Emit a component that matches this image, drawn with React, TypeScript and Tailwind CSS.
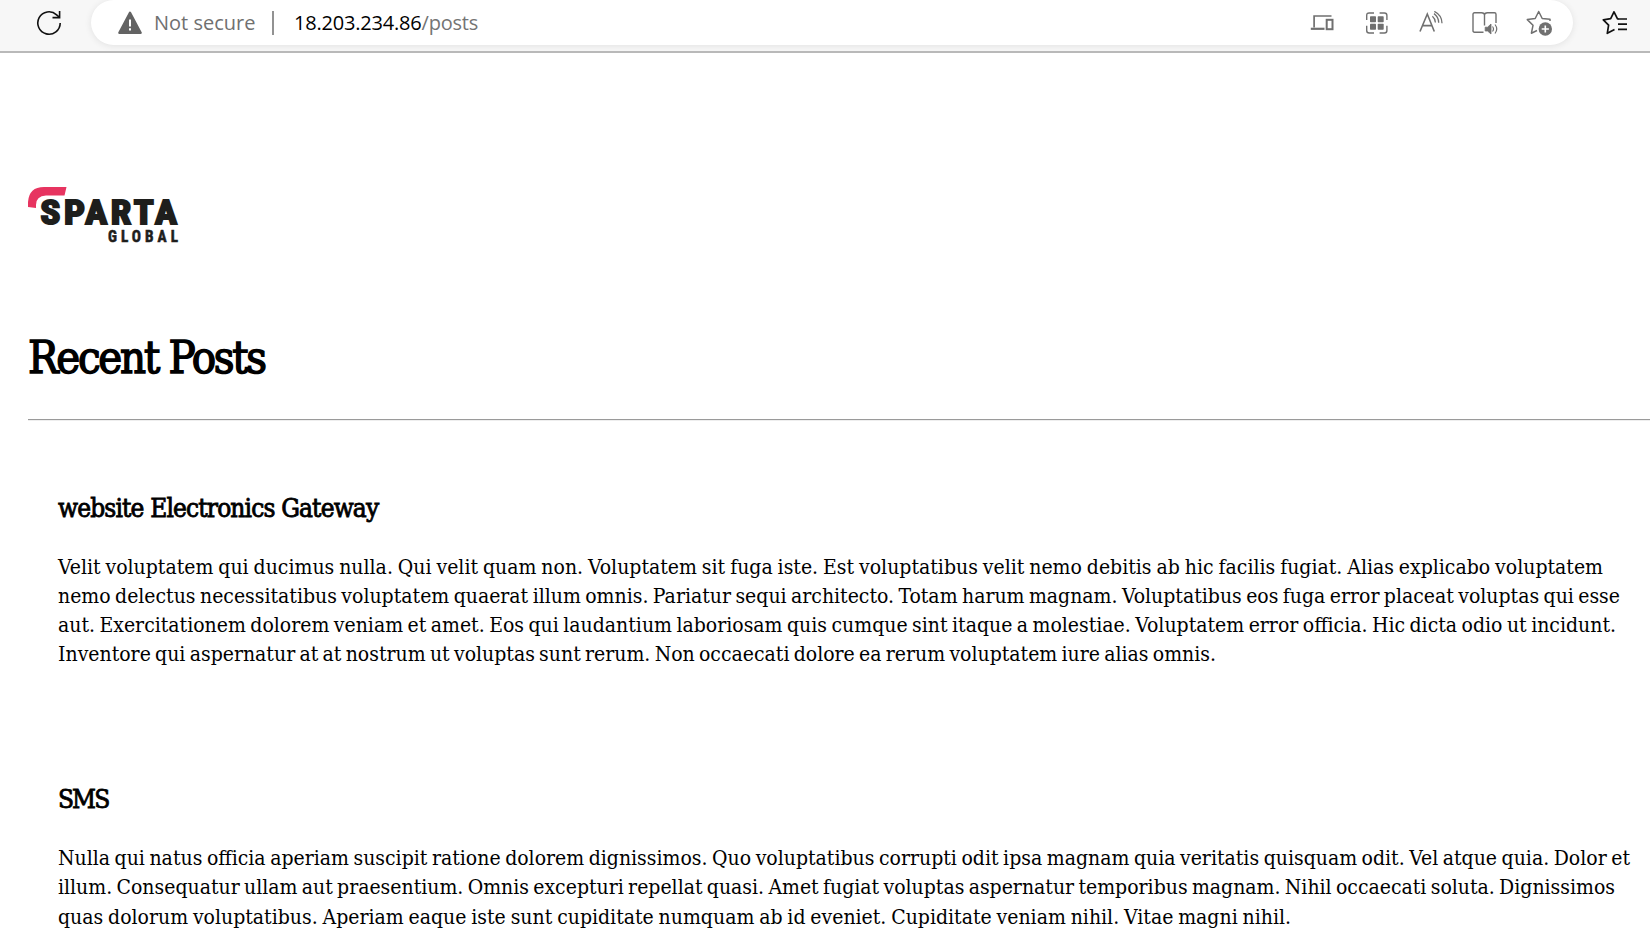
import React from "react";

const posts = [
  {
    title: "website Electronics Gateway",
    titleClass: "w-[322px] tracking-[-0.85px]",
    lines: [
      { text: "Velit voluptatem qui ducimus nulla. Qui velit quam non. Voluptatem sit fuga iste. Est voluptatibus velit nemo debitis ab hic facilis fugiat. Alias explicabo voluptatem", width: "w-[1545px]" },
      { text: "nemo delectus necessitatibus voluptatem quaerat illum omnis. Pariatur sequi architecto. Totam harum magnam. Voluptatibus eos fuga error placeat voluptas qui esse", width: "w-[1562px]" },
      { text: "aut. Exercitationem dolorem veniam et amet. Eos qui laudantium laboriosam quis cumque sint itaque a molestiae. Voluptatem error officia. Hic dicta odio ut incidunt.", width: "w-[1558px]" },
      { text: "Inventore qui aspernatur at at nostrum ut voluptas sunt rerum. Non occaecati dolore ea rerum voluptatem iure alias omnis.", width: "w-[1158px]" },
    ],
  },
  {
    title: "SMS",
    titleClass: "w-[52px] tracking-[-1.9px]",
    lines: [
      { text: "Nulla qui natus officia aperiam suscipit ratione dolorem dignissimos. Quo voluptatibus corrupti odit ipsa magnam quia veritatis quisquam odit. Vel atque quia. Dolor et", width: "w-[1572px]" },
      { text: "illum. Consequatur ullam aut praesentium. Omnis excepturi repellat quasi. Amet fugiat voluptas aspernatur temporibus magnam. Nihil occaecati soluta. Dignissimos", width: "w-[1557px]" },
      { text: "quas dolorum voluptatibus. Aperiam eaque iste sunt cupiditate numquam ab id eveniet. Cupiditate veniam nihil. Vitae magni nihil.", width: "w-[1233px]" },
    ],
  },
];

function ReloadIcon() {
  return (
    <svg width="26" height="26" viewBox="0 0 26 26" fill="none" stroke="#111" strokeWidth="1.6">
      <path d="M24.2 13A11.2 11.2 0 1 1 20.6 4.8L23.5 7.4" />
      <path d="M23.6 1V7.6H16.5" />
    </svg>
  );
}

function WarningIcon() {
  return (
    <svg width="24" height="24" viewBox="0 0 24 24">
      <path d="M12 1.8L22.6 21.8H1.4Z" fill="#636363" stroke="#636363" strokeWidth="2.4" strokeLinejoin="round" />
      <path d="M12 8.5V15.5M12 17.2V19.4" stroke="#fff" strokeWidth="2" />
    </svg>
  );
}

function DevicesIcon() {
  return (
    <svg width="24" height="24" viewBox="0 0 24 24" fill="none" stroke="#707070" strokeWidth="1.7">
      <path d="M4.1 16.5V5H21.5" />
      <path d="M0.8 17.8H14.5" strokeWidth="2.2" />
      <rect x="16.7" y="8.8" width="5.8" height="9.4" strokeWidth="2" />
    </svg>
  );
}

function AppsIcon() {
  return (
    <svg width="24" height="24" viewBox="0 0 24 24" fill="none" stroke="#707070" strokeWidth="1.4">
      <path d="M1.7 9V4.5Q1.7 2 4.2 2H9M14.6 2H19.4Q21.9 2 21.9 4.5V9M21.9 14.8V19.5Q21.9 22 19.4 22H14.6M9 22H4.2Q1.7 22 1.7 19.5V14.8" />
      <g fill="#707070" stroke="none">
        <rect x="5" y="5.2" width="6" height="6" rx="0.7" />
        <rect x="12.7" y="5.2" width="6" height="6" rx="0.7" />
        <rect x="5" y="12.8" width="6" height="6" rx="0.7" />
        <rect x="12.7" y="12.8" width="6" height="6" rx="0.7" />
      </g>
    </svg>
  );
}

function ReadAloudIcon() {
  return (
    <svg width="24" height="24" viewBox="0 0 24 24" fill="none" stroke="#707070" strokeWidth="1.6">
      <path d="M1 20.5L8.3 3L15.3 20.5M3.7 14.6H12.8" />
      <path d="M13.4 5.2Q16.2 7.5 16.4 11.5M15 2.6Q19.6 5.8 19.7 11.8M15.3 0.4Q22.8 4 23 12.2" strokeWidth="1.3" />
    </svg>
  );
}

function ReaderIcon() {
  return (
    <svg width="26" height="26" viewBox="0 0 26 26" fill="none" stroke="#707070" strokeWidth="1.4">
      <path d="M11.5 22.2H2.5Q1 22.2 1 20.7V4.3Q1 2.8 2.5 2.8H9.5Q12.5 2.8 12.5 5V15.5M12.5 5Q12.5 2.8 15.5 2.8H22.5Q24 2.8 24 4.3V13" />
      <path d="M13.2 17.2H15.6L19 14V24L15.6 21H13.2Z" fill="#707070" strokeWidth="0.8" />
      <path d="M20.5 16.5Q22.5 19 20.5 21.5M23 14.5Q26.5 19 23 23.5" strokeWidth="1.2" />
    </svg>
  );
}

function AddFavouriteIcon() {
  return (
    <svg width="26" height="26" viewBox="0 0 26 26" fill="none" stroke="#707070" strokeWidth="1.5">
      <path d="M24 11V9.2L16.2 8.5L12.7 1.5L9.2 8.5L1.3 9.6L7 15.3L5.4 23.2L11 20.5" strokeLinejoin="round" />
      <circle cx="19.3" cy="19" r="6.7" fill="#707070" stroke="none" />
      <path d="M19.3 15.4V22.6M15.7 19H22.9" stroke="#fff" strokeWidth="1.6" />
    </svg>
  );
}

function FavouritesIcon() {
  return (
    <svg width="26" height="26" viewBox="0 0 26 26" fill="none" stroke="#111" strokeWidth="1.7">
      <path d="M16.5 8.8H15.5L12 1.8L8.7 8.7L1.3 9.8L6.6 15.2L5.3 23.3L12.5 19.6" strokeLinejoin="round" />
      <path d="M16 9H25M16 14.2H25M16 19.4H25" />
    </svg>
  );
}

function SpartaLogo() {
  return (
    <svg width="152" height="58" viewBox="0 0 152 58" className="block">
      <path d="M0 20V15Q1 0 16 0H38.5L36.5 8.5H18Q8 9 8 18V21Z" fill="#e73460" />
      <g fill="#1e1e1c" stroke="#1e1e1c" fontWeight="700">
        <text x="12.5" y="37" fontFamily="Roboto, sans-serif" fontSize="33" letterSpacing="3.2" textLength="140" lengthAdjust="spacingAndGlyphs" strokeWidth="2">SPARTA</text>
        <text x="80" y="54.6" fontFamily="Roboto, sans-serif" fontSize="17" letterSpacing="4.5" textLength="74" lengthAdjust="spacingAndGlyphs" strokeWidth="0.6">GLOBAL</text>
      </g>
    </svg>
  );
}

export default function App() {
  return (
    <div className="h-[933px] w-full overflow-hidden bg-white text-black">
      <header className="flex h-[53px] items-start overflow-hidden border-b-2 border-[#b9b9b9] bg-[#f7f7f7] font-['Open_Sans',sans-serif] text-[20px]">
        <button className="ml-9 mt-2.5 block shrink-0"><ReloadIcon /></button>
        <div className="ml-[29px] flex h-[45px] w-[1482px] shrink-0 items-center rounded-[23px] bg-white pl-[27px] pr-[21px] shadow-[0_1px_7px_rgba(0,0,0,0.09)]">
          <WarningIcon />
          <span className="ml-3 w-[101px] whitespace-nowrap text-[#707070]">Not secure</span>
          <span className="ml-[17px] h-6 w-0.5 bg-[#929292]" />
          <span className="ml-5 whitespace-nowrap tracking-[-0.2px] text-black">18.203.234.86<span className="text-[#747474]">/posts</span></span>
          <div className="ml-auto flex items-center">
            <DevicesIcon />
            <span className="ml-[31px]"><AppsIcon /></span>
            <span className="ml-[30px]"><ReadAloudIcon /></span>
            <span className="ml-[29px]"><ReaderIcon /></span>
            <span className="ml-7"><AddFavouriteIcon /></span>
          </div>
        </div>
        <button className="ml-[29px] mt-2.5 block shrink-0"><FavouritesIcon /></button>
      </header>
      <main className="pl-7 pt-[134px] font-['DejaVu_Serif_Condensed','DejaVu_Serif',serif] [font-stretch:condensed]">
        <SpartaLogo />
        <h1 className="mt-[84px] w-[238px] whitespace-nowrap text-[45px] leading-[58px] tracking-[-2.25px] [-webkit-text-stroke:1.4px_black]">Recent Posts</h1>
        <hr className="mt-8 h-0.5 border-0 border-t border-[#9a9a9a] bg-[#eeeeee]" />
        <div className="flex flex-col gap-28 pl-[30px] pt-[69px]">
          {posts.map((post) => (
            <article key={post.title}>
              <h3 className={`${post.titleClass} whitespace-nowrap text-[26px] leading-9 [-webkit-text-stroke:0.8px_black]`}>{post.title}</h3>
              <div className="pt-[27px] text-[21px] leading-[29.1px]">
                {post.lines.map((line) => (
                  <div key={line.text} className={`${line.width} whitespace-nowrap [word-spacing:-3px] [text-align-last:justify]`}>{line.text}</div>
                ))}
              </div>
            </article>
          ))}
        </div>
      </main>
    </div>
  );
}
